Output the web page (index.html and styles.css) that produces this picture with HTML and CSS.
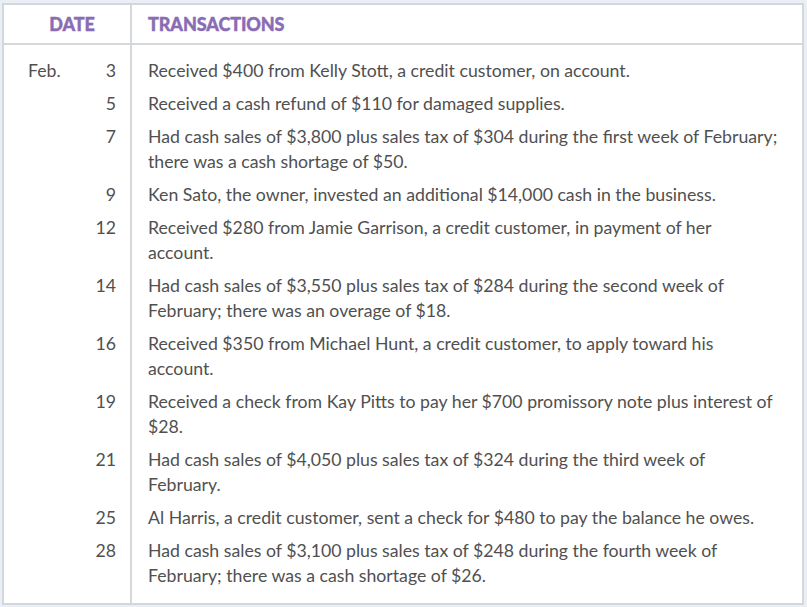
FILE: index.html
```html
<!DOCTYPE html>
<html>
<head>
<meta charset="utf-8">
<link rel="stylesheet" href="styles.css">
</head>
<body>
<div class="frame">
  <div class="table">
    <div class="head">
      <div class="hdate">DATE</div>
      <div class="htrans">TRANSACTIONS</div>
    </div>
    <div class="body">
      <div class="dcol">
        <div class="row one"><span class="mon">Feb.</span><span class="day">3</span></div>
        <div class="row one"><span class="day">5</span></div>
        <div class="row two"><span class="day">7</span></div>
        <div class="row one"><span class="day">9</span></div>
        <div class="row two"><span class="day">12</span></div>
        <div class="row two"><span class="day">14</span></div>
        <div class="row two"><span class="day">16</span></div>
        <div class="row two"><span class="day">19</span></div>
        <div class="row two"><span class="day">21</span></div>
        <div class="row one"><span class="day">25</span></div>
        <div class="row two"><span class="day">28</span></div>
      </div>
      <div class="tcol">
        <div class="row one">Received $400 from Kelly Stott, a credit customer, on account.</div>
        <div class="row one">Received a cash refund of $110 for damaged supplies.</div>
        <div class="row two">Had cash sales of $3,800 plus sales tax of $304 during the first week of February;<br>there was a cash shortage of $50.</div>
        <div class="row one">Ken Sato, the owner, invested an additional $14,000 cash in the business.</div>
        <div class="row two">Received $280 from Jamie Garrison, a credit customer, in payment of her<br>account.</div>
        <div class="row two">Had cash sales of $3,550 plus sales tax of $284 during the second week of<br>February; there was an overage of $18.</div>
        <div class="row two">Received $350 from Michael Hunt, a credit customer, to apply toward his<br>account.</div>
        <div class="row two">Received a check from Kay Pitts to pay her $700 promissory note plus interest of<br>$28.</div>
        <div class="row two">Had cash sales of $4,050 plus sales tax of $324 during the third week of<br>February.</div>
        <div class="row one">Al Harris, a credit customer, sent a check for $480 to pay the balance he owes.</div>
        <div class="row two">Had cash sales of $3,100 plus sales tax of $248 during the fourth week of<br>February; there was a cash shortage of $26.</div>
      </div>
    </div>
  </div>
</div>
</body>
</html>
```

FILE: styles.css
```css
html, body {
  margin: 0;
  padding: 0;
  background: #eaeff5;
}
.frame {
  padding: 3px 3px 2px 2px;
  width: 807px;
  height: 607px;
  box-sizing: border-box;
}
.table {
  height: 100%;
  box-sizing: border-box;
  background: #fff;
  border: 2px solid #d4d7db;
  display: flex;
  flex-direction: column;
  font-family: Lato, "Liberation Sans", sans-serif;
  color: #505050;
}
.head {
  display: grid;
  grid-template-columns: 128px 1fr;
  height: 38px;
  border-bottom: 2px solid #d4d7db;
  color: #8a6cb4;
  font-weight: 900;
  font-size: 18px;
  letter-spacing: -0.1px;
  -webkit-text-stroke: 0.4px #8a6cb4;
}
.hdate {
  border-right: 2px solid #d4d7db;
  display: flex;
  align-items: center;
  justify-content: center;
  padding-left: 10px;
}
.htrans {
  display: flex;
  align-items: center;
  padding-left: 16px;
}
.body {
  flex: 1;
  display: grid;
  grid-template-columns: 128px 1fr;
  padding-top: 13px;
  font-size: 17.7px;
  line-height: 25px;
}
.dcol {
  border-right: 2px solid #d4d7db;
  margin-top: -13px;
  padding-top: 13px;
}
.row {
  margin-bottom: 8px;
}
.one { height: 25px; }
.two { height: 50px; }
.dcol .row {
  display: flex;
  padding: 0 14px 0 24px;
}
.mon { flex: 1; }
.day { margin-left: auto; }
.tcol {
  padding-left: 16px;
  white-space: nowrap;
}
```
